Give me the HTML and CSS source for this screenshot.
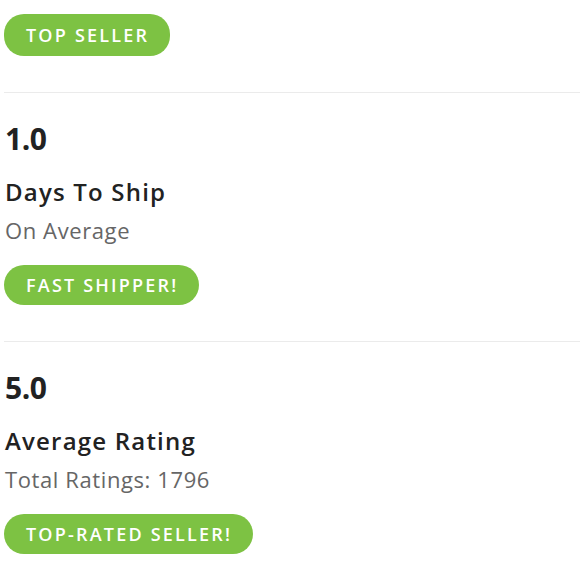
FILE: index.html
```html
<!DOCTYPE html>
<html>
<head>
<meta charset="utf-8">
<link rel="stylesheet" href="styles.css">
</head>
<body>
<div class="stats">
  <div class="stat stat-first">
    <span class="badge">TOP SELLER</span>
  </div>
  <div class="stat">
    <div class="value">1.0</div>
    <div class="label">Days To Ship</div>
    <div class="sub">On Average</div>
    <span class="badge">FAST SHIPPER!</span>
  </div>
  <div class="stat">
    <div class="value">5.0</div>
    <div class="label">Average Rating</div>
    <div class="sub">Total Ratings: 1796</div>
    <span class="badge">TOP-RATED SELLER!</span>
  </div>
</div>
</body>
</html>
```
FILE: styles.css
```css
html, body {
  margin: 0;
  padding: 0;
  background: #ffffff;
}
body {
  font-family: "Open Sans", Lato, sans-serif;
  color: #222222;
}
.stats {
  padding-left: 4px;
  display: flex;
  flex-direction: column;
}
.stat {
  display: flex;
  flex-direction: column;
  align-items: flex-start;
  padding: 28px 0 36px 1px;
  border-top: 1px solid #ebebeb;
}
.stat-first {
  padding-top: 14px;
  border-top: none;
  padding-left: 0;
}
.value {
  font-size: 30px;
  font-weight: 700;
  line-height: 36px;
  color: #222222;
  letter-spacing: -0.5px;
}
.label {
  margin-top: 20px;
  font-size: 24px;
  font-weight: 600;
  line-height: 30px;
  letter-spacing: 1.2px;
  color: #222222;
}
.sub {
  margin-top: 9px;
  font-size: 22px;
  font-weight: 400;
  line-height: 28px;
  letter-spacing: 0.6px;
  color: #666666;
}
.badge {
  display: inline-block;
  margin-top: 21px;
  margin-left: -1px;
  background: #7dc243;
  color: #ffffff;
  font-size: 18px;
  font-weight: 600;
  letter-spacing: 2.2px;
  line-height: 40px;
  height: 40px;
  padding: 0 21px 0 22px;
  border-radius: 20px;
}
.stat-first .badge {
  margin-top: 0;
  margin-left: 0;
  height: 42px;
  line-height: 42px;
}
```
